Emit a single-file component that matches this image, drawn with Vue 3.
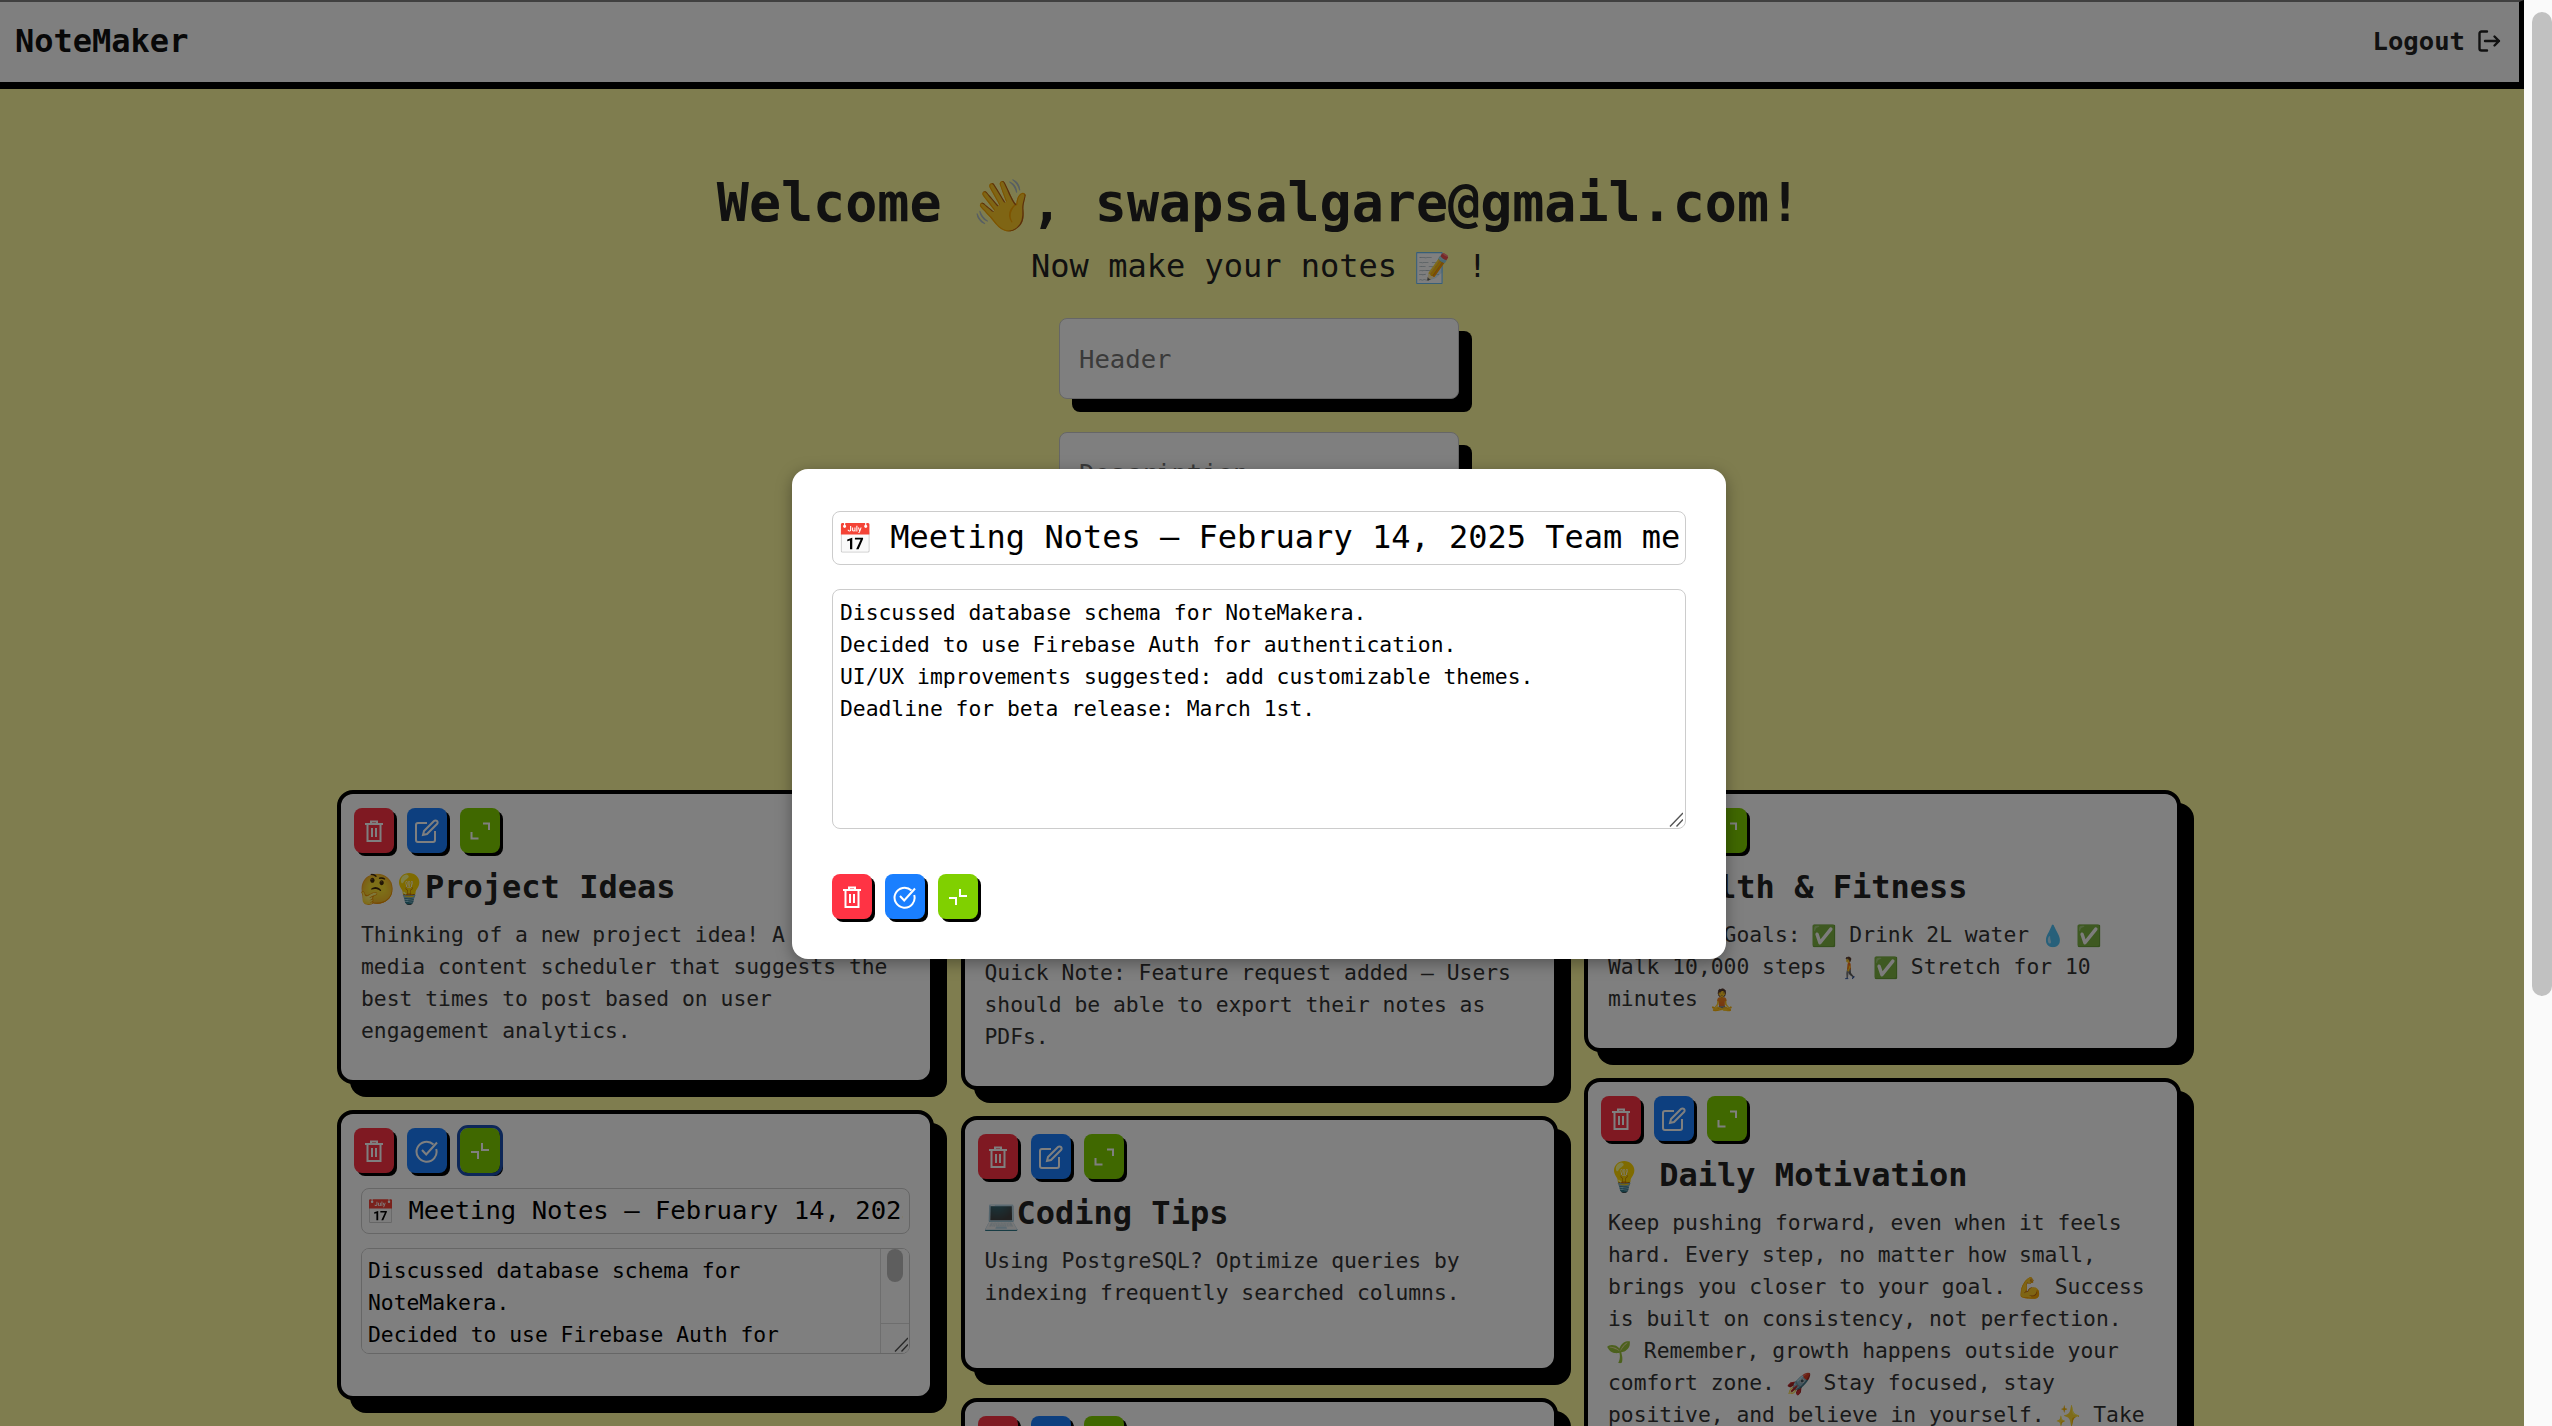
<script setup>
const columns = [
  [
    { id: 1, title: '🤔💡Project Ideas', body: 'Thinking of a new project idea! A social media content scheduler that suggests the best times to post based on user engagement analytics.' },
    { id: 2, editing: true, title: '📅 Meeting Notes – February 14, 2025 Team meeting', body: 'Discussed database schema for NoteMakera.\nDecided to use Firebase Auth for authentication.\nUI/UX improvements suggested: add customizable themes.\nDeadline for beta release: March 1st.' }
  ],
  [
    { id: 3, title: '📌Product Feature Requests and Backlog', body: 'Quick Note: Feature request added – Users should be able to export their notes as PDFs.' },
    { id: 4, title: '💻Coding Tips', body: 'Using PostgreSQL? Optimize queries by indexing frequently searched columns.' },
    { id: 5, title: '📚Reading List', body: 'Books to read this month.' }
  ],
  [
    { id: 6, title: '💪 Health & Fitness', body: 'Wellness Goals: ✅ Drink 2L water 💧 ✅ Walk 10,000 steps 🚶 ✅ Stretch for 10 minutes 🧘' },
    { id: 7, title: '💡 Daily Motivation', body: 'Keep pushing forward, even when it feels hard. Every step, no matter how small, brings you closer to your goal. 💪 Success is built on consistency, not perfection. 🌱 Remember, growth happens outside your comfort zone. 🚀 Stay focused, stay positive, and believe in yourself. ✨ Take it one day at a time.' }
  ]
]
const modalTitle = '📅 Meeting Notes – February 14, 2025 Team meeting'
const modalBody = columns[0][1].body
const emojiRe = /(\p{Extended_Pictographic}\uFE0F?)/u
const parts = (text) =>
  text.split(emojiRe).filter(Boolean).map((t) => ({ t, emoji: emojiRe.test(t) }))
</script>

<template>
  <div class="shell">
    <div class="viewport">
      <nav class="navbar">
        <span class="brand">NoteMaker</span>
        <a class="logout">Logout
          <svg class="logout-icon" viewBox="0 0 24 24" width="24" height="24" fill="none" stroke="currentColor" stroke-width="2.4" stroke-linecap="round" stroke-linejoin="round">
            <path d="M10 2.5H4.5a2 2 0 0 0-2 2v15a2 2 0 0 0 2 2H10" />
            <path d="M8 12h14M17.5 7.5 22 12l-4.5 4.5" />
          </svg>
        </a>
      </nav>

      <main class="content">
        <header class="hero">
          <h1>Welcome <span class="emoji-h1">👋</span>, swapsalgare@gmail.com!</h1>
          <p>Now make your notes <span class="emoji">📝</span> !</p>
        </header>

        <form class="new-note">
          <input class="field" placeholder="Header" />
          <input class="field" placeholder="Description" />
        </form>

        <section class="board">
          <div v-for="(col, i) in columns" :key="i" class="column">
            <article v-for="note in col" :key="note.id" class="card" :class="{ editing: note.editing }">
              <div class="actions">
                <button class="btn red" type="button">
                  <svg viewBox="0 0 24 24" width="24" height="24" fill="none" stroke="currentColor" stroke-width="2"><path d="M3 5h18M9 5V2.5h6V5M5.5 5v17h13V5M10 9v9M14 9v9" /></svg>
                </button>
                <button class="btn blue" type="button">
                  <svg v-if="note.editing" viewBox="0 0 24 24" width="24" height="24" fill="none" stroke="currentColor" stroke-width="2"><path d="M18.5 5.5a10 10 0 1 0 2.7 4.5" /><path d="M7 11l4.2 4.5L22 3.5" /></svg>
                  <svg v-else viewBox="0 0 24 24" width="24" height="24" fill="none" stroke="currentColor" stroke-width="2"><path d="M12 4H3a2 2 0 0 0-2 2v15a2 2 0 0 0 2 2h15a2 2 0 0 0 2-2v-9" /><path d="M9 12 19 2a2 2 0 0 1 3 3L12 15l-4 1z" /></svg>
                </button>
                <button class="btn green" :class="{ focused: note.editing }" type="button">
                  <svg v-if="note.editing" viewBox="0 0 24 24" width="24" height="24" fill="none" stroke="currentColor" stroke-width="2"><path d="M14 4v7h7M3 13h7v7" /></svg>
                  <svg v-else viewBox="0 0 24 24" width="24" height="24" fill="none" stroke="currentColor" stroke-width="2"><path d="M15 4.5h6v6.5M3.5 13v6.5h7" /></svg>
                </button>
              </div>

              <div v-if="note.editing" class="editor">
                <div class="card-title-input" role="textbox"><template v-for="(p, k) in parts(note.title)" :key="k"><span v-if="p.emoji" class="emoji">{{ p.t }}</span><template v-else>{{ p.t }}</template></template></div>
                <div class="card-area-wrap">
                  <textarea class="card-area" :value="note.body"></textarea>
                  <div class="fake-scroll">
                    <span class="fake-thumb"></span>
                    <span class="fake-corner">
                      <svg viewBox="0 0 14 15" width="14" height="15" fill="none" stroke="#555" stroke-width="1.4"><path d="M14 1 1 14.5M14 7.5 7.5 14.5" /></svg>
                    </span>
                  </div>
                </div>
              </div>
              <template v-else>
                <h3 class="title"><template v-for="(p, k) in parts(note.title)" :key="k"><span v-if="p.emoji" class="emoji">{{ p.t }}</span><template v-else>{{ p.t }}</template></template></h3>
                <p class="body"><template v-for="(p, k) in parts(note.body)" :key="k"><span v-if="p.emoji" class="emoji-body">{{ p.t }}</span><template v-else>{{ p.t }}</template></template></p>
              </template>
            </article>
          </div>
        </section>
      </main>

      <div class="overlay">
        <div class="modal">
          <div class="modal-title" role="textbox"><template v-for="(p, k) in parts(modalTitle)" :key="k"><span v-if="p.emoji" class="emoji">{{ p.t }}</span><template v-else>{{ p.t }}</template></template></div>
          <div class="modal-area-wrap">
            <textarea class="modal-area" :value="modalBody"></textarea>
            <svg class="grip" viewBox="0 0 14 15" width="14" height="15" fill="none" stroke="#555" stroke-width="1.4"><path d="M14 1 1 14.5M14 7.5 7.5 14.5" /></svg>
          </div>
          <div class="actions modal-actions">
            <button class="btn red" type="button">
              <svg viewBox="0 0 24 24" width="24" height="24" fill="none" stroke="currentColor" stroke-width="2"><path d="M3 5h18M9 5V2.5h6V5M5.5 5v17h13V5M10 9v9M14 9v9" /></svg>
            </button>
            <button class="btn blue" type="button">
              <svg viewBox="0 0 24 24" width="24" height="24" fill="none" stroke="currentColor" stroke-width="2"><path d="M18.5 5.5a10 10 0 1 0 2.7 4.5" /><path d="M7 11l4.2 4.5L22 3.5" /></svg>
            </button>
            <button class="btn green" type="button">
              <svg viewBox="0 0 24 24" width="24" height="24" fill="none" stroke="currentColor" stroke-width="2"><path d="M14 4v7h7M3 13h7v7" /></svg>
            </button>
          </div>
        </div>
      </div>
    </div>

    <div class="scrollbar"><span class="scroll-thumb"></span></div>
  </div>
</template>

<style>
html, body { margin: 0; overflow: hidden; }
</style>

<style scoped>
* { box-sizing: border-box; }
.shell {
  display: flex;
  width: 2552px;
  height: 1426px;
  overflow: hidden;
  font-family: "DejaVu Sans Mono", "Liberation Mono", monospace;
}
.viewport {
  position: relative;
  width: 2524px;
  height: 1426px;
  overflow: hidden;
  background: #fffb9e;
}
.scrollbar {
  flex: 1;
  background: #fafafa;
  padding: 12px 0 0 8px;
}
.scroll-thumb {
  display: block;
  height: 984px;
  background: #c1c1c1;
  border-radius: 10px;
}
.navbar {
  display: flex;
  align-items: center;
  justify-content: space-between;
  height: 89px;
  padding: 0 18px 3px 15px;
  background: #ffffff;
  border-top: 2px solid #808080;
  border-right: 5px solid #000;
  border-bottom: 7px solid #000;
}
.brand {
  font-size: 32px;
  font-weight: 700;
  color: #111;
}
.logout {
  display: flex;
  align-items: center;
  gap: 12px;
  font-size: 25.6px;
  font-weight: 700;
  color: #222;
}
.emoji {
  display: inline-block;
  font-size: 0.8em;
  line-height: 0;
  transform: scale(1.14);
}
.emoji-body {
  display: inline-block;
  font-size: 0.85em;
  line-height: 0;
  transform: scale(1.14);
}
.emoji-h1 {
  display: inline-block;
  font-size: 0.86em;
  line-height: 0;
  transform: scale(1.1);
}
.content {
  padding: 0 6px 0 0;
}
.hero {
  text-align: center;
  color: #222;
  padding-top: 80px;
}
.hero h1 {
  margin: 0;
  font-size: 53.33px;
  line-height: 68px;
  font-weight: 700;
}
.hero p {
  margin: 7px 0 0;
  font-size: 32px;
  line-height: 44px;
}
.new-note {
  display: flex;
  flex-direction: column;
  align-items: center;
  gap: 33px;
  margin-top: 30px;
  height: 472px;
}
.field {
  width: 400px;
  height: 81px;
  padding: 0 19px;
  font: inherit;
  font-size: 25.6px;
  background: #fff;
  border: 1.6px solid #ccc;
  border-radius: 8px;
  box-shadow: 13px 13px 0 #000;
}
.board {
  display: flex;
  justify-content: center;
  align-items: flex-start;
  gap: 26.5px;
}
.column {
  display: flex;
  flex-direction: column;
  gap: 26px;
  width: 597px;
}
.card {
  min-height: 256px;
  padding: 14px 13px 33px;
  background: #fff;
  border: 4px solid #000;
  border-radius: 16px;
  box-shadow: 13px 13px 0 #000;
}
.card.editing {
  padding-bottom: 42px;
}
.actions {
  display: flex;
  gap: 13px;
}
.btn {
  display: flex;
  align-items: center;
  justify-content: center;
  width: 40px;
  height: 45px;
  padding: 0;
  color: #fff;
  border: 0;
  border-radius: 8px;
  box-shadow: 3px 3px 0 #000;
}
.red { background: #ff3344; }
.blue { background: #1a7fff; }
.green { background: #80d000; }
.focused { outline: 3px solid #1a4fb0; }
.title {
  margin: 15px 7px 0;
  font-size: 32px;
  line-height: 38px;
  font-weight: 700;
  color: #222;
}
.body {
  margin: 13px 7px 0;
  font-size: 21.33px;
  line-height: 32px;
  color: #333;
  overflow-wrap: break-word;
}
.editor {
  display: flex;
  flex-direction: column;
  gap: 14px;
  margin: 15px 7px 0;
}
.card-title-input {
  height: 46px;
  padding: 0 6px;
  font-size: 25.6px;
  line-height: 43px;
  white-space: nowrap;
  overflow: clip;
  overflow-clip-margin: content-box;
  color: #000;
  background: #fff;
  border: 1.6px solid #ccc;
  border-radius: 8px;
}
.card-area-wrap {
  position: relative;
  height: 106px;
  border: 1.6px solid #ccc;
  border-radius: 8px;
  overflow: hidden;
}
.card-area {
  display: block;
  width: 100%;
  height: 100%;
  padding: 6px 29px 0 6px;
  font: inherit;
  font-size: 21.33px;
  line-height: 32px;
  background: #fff;
  border: 0;
  outline: 0;
  resize: none;
  overflow: hidden;
}
.fake-scroll {
  position: absolute;
  top: 0;
  right: 0;
  bottom: 0;
  width: 29px;
  background: #fff;
  border-left: 1.6px solid #ddd;
  pointer-events: none;
}
.fake-thumb {
  display: block;
  width: 16px;
  height: 33px;
  margin-left: 6px;
  background: #bdbdbd;
  border-radius: 8px;
}
.fake-corner {
  position: absolute;
  left: 0;
  right: 0;
  bottom: 0;
  height: 30px;
  padding: 13px 0 0 13px;
  border-top: 1.6px solid #ddd;
}
.fake-corner svg { display: block; }
.overlay {
  position: absolute;
  inset: 0;
  display: flex;
  align-items: center;
  justify-content: center;
  padding: 2px 6px 0 0;
  background: rgba(0, 0, 0, 0.5);
}
.modal {
  display: flex;
  flex-direction: column;
  width: 934px;
  height: 490px;
  padding: 42px 40px;
  background: #fff;
  border-radius: 16px;
  box-shadow: 0 4px 16px rgba(0, 0, 0, 0.35);
}
.modal-title {
  flex: none;
  height: 54px;
  padding: 0 4px 0 6px;
  font-size: 32px;
  line-height: 51px;
  white-space: nowrap;
  overflow: clip;
  overflow-clip-margin: content-box;
  color: #000;
  background: #fff;
  border: 1.6px solid #ccc;
  border-radius: 8px;
}
.modal-area-wrap {
  position: relative;
  flex: none;
  height: 240px;
  margin-top: 24px;
}
.modal-area {
  display: block;
  width: 100%;
  height: 100%;
  padding: 7px;
  font: inherit;
  font-size: 21.33px;
  line-height: 32px;
  color: #000;
  background: #fff;
  border: 1.6px solid #ccc;
  border-radius: 8px;
  outline: 0;
  resize: none;
  overflow: hidden;
}
.grip {
  position: absolute;
  right: 3px;
  bottom: 2px;
}
.modal-actions {
  margin-top: 45px;
}
</style>
